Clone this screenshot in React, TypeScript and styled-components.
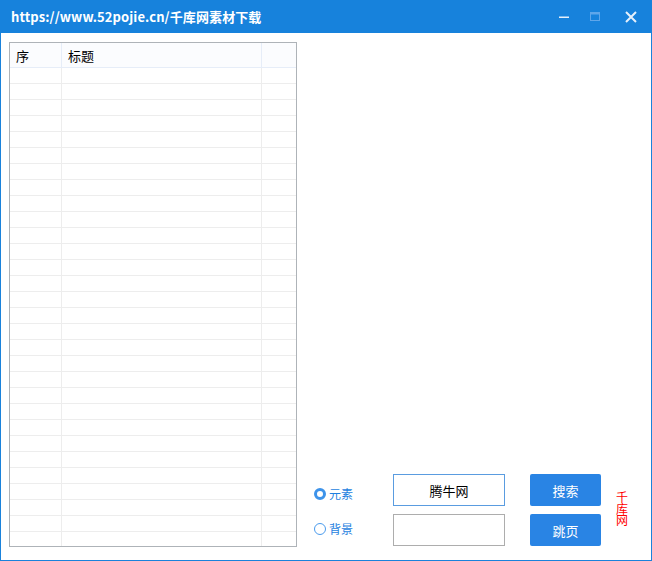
import React from "react";
import styled, { createGlobalStyle } from "styled-components";

const GlobalStyle = createGlobalStyle`
  html, body {
    margin: 0;
    padding: 0;
    background: #ffffff;
  }
  * { box-sizing: border-box; }
`;

const FONT = `"Noto Sans CJK SC", "Liberation Sans", sans-serif`;

const Window = styled.div`
  width: 652px;
  height: 561px;
  border: 1px solid #1a82db;
  border-top: none;
  display: flex;
  flex-direction: column;
  font-family: ${FONT};
  background: #fff;
`;

const TitleBar = styled.div`
  height: 33px;
  margin: 0 -1px;
  background: #1782dc;
  display: flex;
  align-items: center;
  padding-left: 11px;
  padding-right: 3px;
  color: #fff;
  flex-shrink: 0;
`;

const Title = styled.div`
  flex: 1;
  font-size: 13px;
  font-weight: bold;
  letter-spacing: 0.1px;
`;

const Controls = styled.div`
  display: flex;
  align-items: center;
  height: 100%;
`;

const CtrlBtn = styled.div<{ $w: number }>`
  width: ${({ $w }) => $w}px;
  height: 100%;
  display: flex;
  align-items: center;
  justify-content: center;
`;

const Body = styled.div`
  flex: 1;
  display: flex;
  padding: 9px 14px 13px 8px;
  min-height: 0;
`;

const Table = styled.div`
  width: 288px;
  height: 505px;
  border: 1px solid #aeb3b8;
  overflow: hidden;
  display: flex;
  flex-direction: column;
  flex-shrink: 0;
`;

const HeadRow = styled.div`
  display: grid;
  grid-template-columns: 52px 200px 1fr;
  height: 25px;
  background: #fbfcfe;
  border-bottom: 1px solid #e6edf8;
  flex-shrink: 0;
`;

const HeadCell = styled.div`
  border-right: 1px solid #e6edf8;
  font-size: 13px;
  color: #000;
  padding-left: 6px;
  display: flex;
  align-items: center;
  &:last-child { border-right: none; }
`;

const Row = styled.div`
  display: grid;
  grid-template-columns: 52px 200px 1fr;
  height: 16px;
  border-bottom: 1px solid #ededed;
  flex-shrink: 0;
`;

const Cell = styled.div`
  border-right: 1px solid #ededed;
  &:last-child { border-right: none; }
`;

const Side = styled.div`
  flex: 1;
  display: flex;
  align-items: flex-end;
  padding-left: 17px;
`;

const Form = styled.div`
  display: grid;
  grid-template-columns: 79px 112px 25px 71px 15px 14px;
  grid-template-rows: 32px 32px;
  row-gap: 8px;
  margin-bottom: 1px;
`;

const RadioLabel = styled.label<{ $row: number; $top: number }>`
  grid-column: 1;
  grid-row: ${({ $row }) => $row};
  align-self: start;
  margin-top: ${({ $top }) => $top}px;
  height: 12px;
  display: flex;
  align-items: center;
  gap: 3px;
  font-size: 12px;
  line-height: 12px;
  color: #1e7fe0;
`;

const RadioDot = styled.span<{ $checked?: boolean }>`
  width: 12px;
  height: 12px;
  border-radius: 50%;
  border: ${({ $checked }) => ($checked ? "3.5px solid #3d93ea" : "1px solid #4a9bed")};
  background: #fff;
  flex-shrink: 0;
`;

const Input = styled.div<{ $row: number; $focused?: boolean }>`
  grid-column: 2;
  grid-row: ${({ $row }) => $row};
  height: 32px;
  border: 1px solid ${({ $focused }) => ($focused ? "#5a9ce0" : "#adadad")};
  display: flex;
  align-items: center;
  justify-content: center;
  font-size: 13px;
  color: #000;
`;

const Button = styled.div<{ $row: number }>`
  grid-column: 4;
  grid-row: ${({ $row }) => $row};
  height: 32px;
  background: #2984e4;
  border-radius: 2px;
  color: #fff;
  font-size: 13px;
  display: flex;
  align-items: center;
  justify-content: center;
`;

const Vertical = styled.div`
  grid-column: 6;
  grid-row: 1 / 3;
  align-self: start;
  margin-top: 17px;
  color: #ff0000;
  font-size: 12px;
  line-height: 11.5px;
  width: 12px;
  word-break: break-all;
`;

const ROWS = 30;

export default function App() {
  return (
    <>
      <GlobalStyle />
      <Window>
        <TitleBar>
          <Title>https://www.52pojie.cn/千库网素材下载</Title>
          <Controls>
            <CtrlBtn $w={26}>
              <svg width="12" height="12" viewBox="0 0 12 12">
                <rect x="1" y="5.5" width="10" height="1.5" fill="#e6f0fb" />
              </svg>
            </CtrlBtn>
            <CtrlBtn $w={36}>
              <svg width="12" height="12" viewBox="0 0 12 12">
                <rect x="1.5" y="1.5" width="9" height="8" fill="none" stroke="#5fa6ea" strokeWidth="1" />
                <rect x="1.5" y="1.5" width="9" height="2" fill="#5fa6ea" />
              </svg>
            </CtrlBtn>
            <CtrlBtn $w={36}>
              <svg width="12" height="12" viewBox="0 0 12 12">
                <path d="M1 1 L11 11 M11 1 L1 11" stroke="#e6f0fb" strokeWidth="2" />
              </svg>
            </CtrlBtn>
          </Controls>
        </TitleBar>
        <Body>
          <Table>
            <HeadRow>
              <HeadCell>序</HeadCell>
              <HeadCell>标题</HeadCell>
              <HeadCell />
            </HeadRow>
            {Array.from({ length: ROWS }).map((_, i) => (
              <Row key={i}>
                <Cell />
                <Cell />
                <Cell />
              </Row>
            ))}
          </Table>
          <Side>
            <Form>
              <RadioLabel $row={1} $top={14}>
                <RadioDot $checked />
                元素
              </RadioLabel>
              <Input $row={1} $focused>腾牛网</Input>
              <Button $row={1}>搜索</Button>
              <Vertical>千库网</Vertical>
              <RadioLabel $row={2} $top={9}>
                <RadioDot />
                背景
              </RadioLabel>
              <Input $row={2} />
              <Button $row={2}>跳页</Button>
            </Form>
          </Side>
        </Body>
      </Window>
    </>
  );
}
